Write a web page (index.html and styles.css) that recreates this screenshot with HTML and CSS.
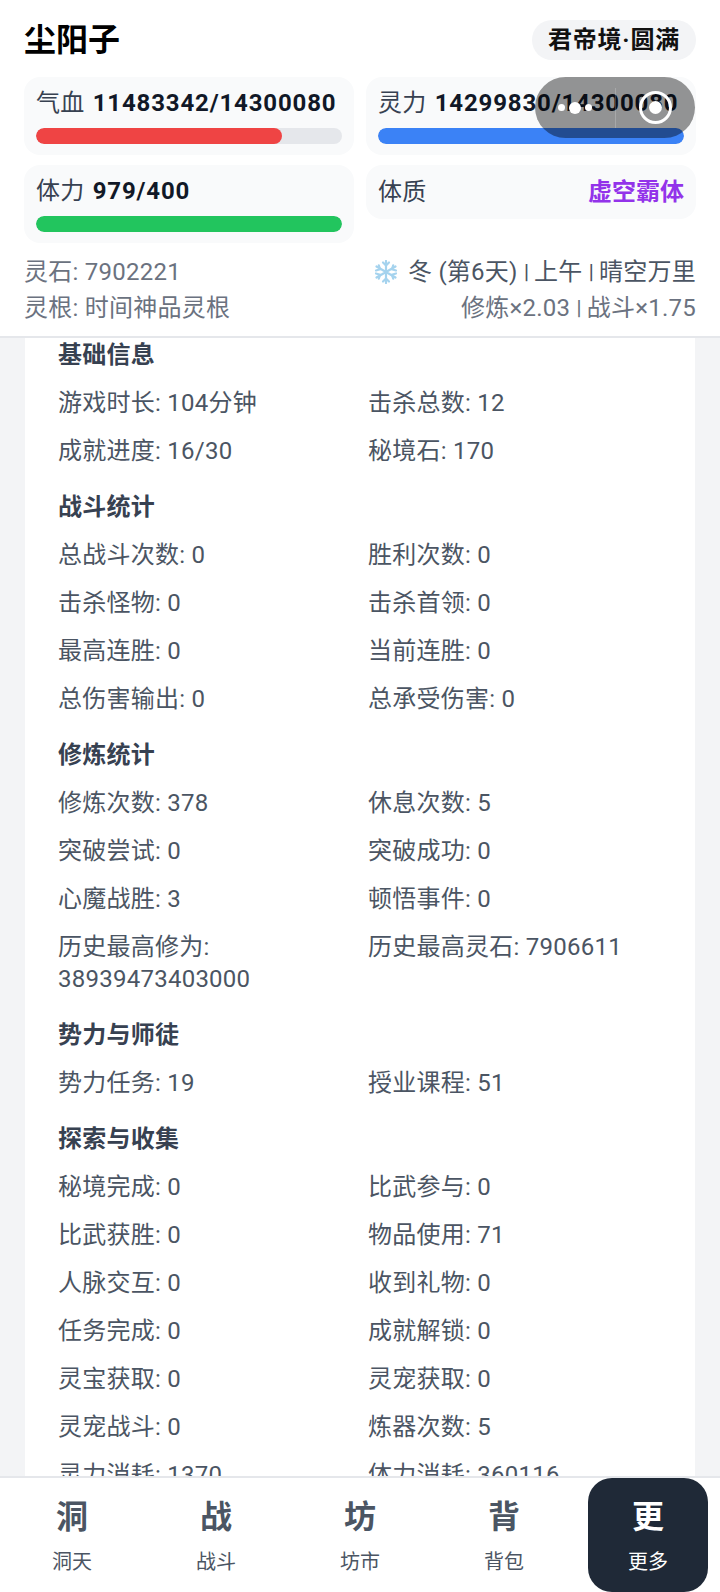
FILE: index.html
```html
<!DOCTYPE html>
<html lang="zh-CN">
<head>
  <meta charset="UTF-8" />
  <meta name="viewport" content="width=device-width, initial-scale=1.0"/>
  <title>尘阳子</title>
  <link rel="stylesheet" href="styles.css">
</head>
<body>
  <div class="app">
    <div class="top">
      <div class="top-head">
        <h1>尘阳子</h1>
        <span class="realm">君帝境·圆满</span>
      </div>
      <div class="stat-grid">
        <div class="stat">
          <div class="stat-label">气血 <b>11483342/14300080</b></div>
          <div class="bar"><div class="bar-fill red" style="width: 80.3%"></div></div>
        </div>
        <div class="stat">
          <div class="stat-label">灵力 <b>14299830/14300080</b></div>
          <div class="bar"><div class="bar-fill blue" style="width: 100%"></div></div>
        </div>
        <div class="stat">
          <div class="stat-label">体力 <b>979/400</b></div>
          <div class="bar"><div class="bar-fill green" style="width: 100%"></div></div>
        </div>
        <div class="stat stat-row">
          <span class="stat-label">体质</span>
          <b class="purple">虚空霸体</b>
        </div>
      </div>
      <div class="info-row">
        <span>灵石: 7902221</span>
        <span class="season">
          <svg class="snow" viewBox="0 0 24 24" fill="none" stroke="#a5d3ee" stroke-width="2.2" stroke-linecap="round">
            <path d="M12 1v22M2.5 6.5l19 11M2.5 17.5l19-11"/>
            <path d="M9 2.5l3 3 3-3M9 21.5l3-3 3 3M2 10.5l4-1.2-1.2-4M22 13.5l-4 1.2 1.2 4M2 13.5l4 1.2-1.2 4M22 10.5l-4-1.2 1.2-4"/>
          </svg>
          <span>冬 (第6天) <span class="sep">|</span> 上午 <span class="sep">|</span> 晴空万里</span>
        </span>
      </div>
      <div class="info-row">
        <span>灵根: 时间神品灵根</span>
        <span>修炼×2.03 <span class="sep">|</span> 战斗×1.75</span>
      </div>
    </div>

    <div class="main">
      <div class="card">
        <h2>基础信息</h2>
        <div class="rows">
          <div>游戏时长: 104分钟</div><div>击杀总数: 12</div>
          <div>成就进度: 16/30</div><div>秘境石: 170</div>
        </div>
        <h2>战斗统计</h2>
        <div class="rows">
          <div>总战斗次数: 0</div><div>胜利次数: 0</div>
          <div>击杀怪物: 0</div><div>击杀首领: 0</div>
          <div>最高连胜: 0</div><div>当前连胜: 0</div>
          <div>总伤害输出: 0</div><div>总承受伤害: 0</div>
        </div>
        <h2>修炼统计</h2>
        <div class="rows">
          <div>修炼次数: 378</div><div>休息次数: 5</div>
          <div>突破尝试: 0</div><div>突破成功: 0</div>
          <div>心魔战胜: 3</div><div>顿悟事件: 0</div>
          <div>历史最高修为: 38939473403000</div><div>历史最高灵石: 7906611</div>
        </div>
        <h2>势力与师徒</h2>
        <div class="rows">
          <div>势力任务: 19</div><div>授业课程: 51</div>
        </div>
        <h2>探索与收集</h2>
        <div class="rows">
          <div>秘境完成: 0</div><div>比武参与: 0</div>
          <div>比武获胜: 0</div><div>物品使用: 71</div>
          <div>人脉交互: 0</div><div>收到礼物: 0</div>
          <div>任务完成: 0</div><div>成就解锁: 0</div>
          <div>灵宝获取: 0</div><div>灵宠获取: 0</div>
          <div>灵宠战斗: 0</div><div>炼器次数: 5</div>
          <div>灵力消耗: 1370</div><div>体力消耗: 360116</div>
        </div>
      </div>
    </div>

    <div class="nav">
      <div class="tab"><span class="tab-icon">洞</span><span>洞天</span></div>
      <div class="tab"><span class="tab-icon">战</span><span>战斗</span></div>
      <div class="tab"><span class="tab-icon">坊</span><span>坊市</span></div>
      <div class="tab"><span class="tab-icon">背</span><span>背包</span></div>
      <div class="tab active"><span class="tab-icon">更</span><span>更多</span></div>
    </div>
  </div>

  <div class="capsule">
    <div class="capsule-dots"><i></i><i class="big"></i><i></i></div>
    <div class="capsule-line"></div>
    <div class="capsule-close"><i></i></div>
  </div>
</body>
</html>
```

FILE: styles.css
```css
* {
  box-sizing: border-box;
}

body {
  margin: 0;
  font-family: Roboto, "Noto Sans CJK SC", sans-serif;
  letter-spacing: 0.25px;
  background: #f3f4f6;
  color: #4b5563;
}

.app {
  height: 1592px;
  display: flex;
  flex-direction: column;
  overflow: hidden;
}

.top {
  background: #fff;
  padding: 20px 24px 0;
  height: 338px;
  flex-shrink: 0;
  border-bottom: 2px solid #e5e7eb;
}

.top-head {
  display: flex;
  justify-content: space-between;
  align-items: center;
  height: 40px;
  margin-bottom: 17px;
}

h1 {
  margin: 0;
  font-size: 32px;
  line-height: 40px;
  font-weight: 700;
  letter-spacing: 0;
  color: #000;
}

.realm {
  background: #f3f4f6;
  border-radius: 20px;
  padding: 0 16px;
  height: 40px;
  line-height: 40px;
  font-size: 24px;
  font-weight: 700;
  letter-spacing: 0.8px;
  color: #111;
}

.stat-grid {
  display: grid;
  grid-template-columns: 1fr 1fr;
  gap: 10px 12px;
  align-items: start;
}

.stat {
  background: #f9fafb;
  border-radius: 16px;
  padding: 11px 12px;
}

.stat-label {
  font-size: 24px;
  line-height: 30px;
  white-space: nowrap;
  color: #374151;
}

.stat-label b {
  margin-left: 2px;
  letter-spacing: 0.85px;
  color: #111827;
}

.bar {
  height: 16px;
  margin-top: 10px;
  background: #e5e7eb;
  border-radius: 8px;
  overflow: hidden;
}

.bar-fill {
  height: 100%;
  border-radius: 8px;
}

.red { background: #ef4444; }
.blue { background: #3b82f6; }
.green { background: #22c55e; }

.stat-row {
  display: flex;
  justify-content: space-between;
  align-items: center;
  height: 54px;
}

.purple {
  font-size: 24px;
  line-height: 30px;
  letter-spacing: 0;
  color: #9333ea;
}

.info-row {
  display: flex;
  justify-content: space-between;
  font-size: 24px;
  line-height: 36px;
  color: #6b7280;
}

.stat-grid + .info-row {
  margin-top: 11px;
}

.season {
  display: flex;
  align-items: center;
  gap: 10px;
  color: #4b5563;
}

.sep {
  font-size: 20px;
  font-weight: 500;
  letter-spacing: -1px;
  vertical-align: 1px;
}

.snow {
  width: 24px;
  height: 24px;
}

.main {
  flex: 1;
  min-height: 0;
  overflow: hidden;
}

.card {
  margin: 0 25px;
  padding: 1px 33px 0;
  background: #fff;
  height: 100%;
  overflow: hidden;
}

h2 {
  margin: 0 0 16px;
  font-size: 24px;
  line-height: 32px;
  font-weight: 700;
  color: #374151;
}

.rows {
  display: grid;
  grid-template-columns: 1fr 1fr;
  column-gap: 16px;
  row-gap: 16px;
  margin-bottom: 24px;
  font-size: 24px;
  line-height: 32px;
  color: #4b5563;
}

.nav {
  height: 116px;
  flex-shrink: 0;
  display: flex;
  background: #fff;
  border-top: 2px solid #e5e7eb;
}

.tab {
  flex: 1;
  display: flex;
  flex-direction: column;
  align-items: center;
  justify-content: center;
  gap: 9px;
  font-size: 20px;
  line-height: 28px;
  letter-spacing: 0;
  color: #4b5563;
}

.tab-icon {
  font-size: 32px;
  line-height: 44px;
  font-weight: 700;
}

.tab.active {
  flex: none;
  width: 120px;
  margin: 0 12px;
  background: #1f2937;
  color: #fff;
  border-radius: 24px;
}

.capsule {
  position: absolute;
  left: 535px;
  top: 77px;
  width: 160px;
  height: 61px;
  border-radius: 31px;
  background: rgba(0, 0, 0, 0.41);
  display: flex;
  align-items: center;
}

.capsule-dots {
  flex: 1;
  display: flex;
  justify-content: center;
  align-items: center;
  gap: 4px;
}

.capsule-dots i {
  width: 7px;
  height: 7px;
  border-radius: 50%;
  background: #fff;
}

.capsule-dots i.big {
  width: 12px;
  height: 12px;
}

.capsule-line {
  width: 1px;
  height: 40px;
  background: rgba(255, 255, 255, 0.2);
}

.capsule-close {
  flex: 1;
  display: flex;
  justify-content: center;
}

.capsule-close i {
  width: 33px;
  height: 33px;
  border: 3px solid #fff;
  border-radius: 50%;
  display: flex;
  align-items: center;
  justify-content: center;
}

.capsule-close i::after {
  content: "";
  width: 13px;
  height: 13px;
  border-radius: 50%;
  background: #fff;
}
```
